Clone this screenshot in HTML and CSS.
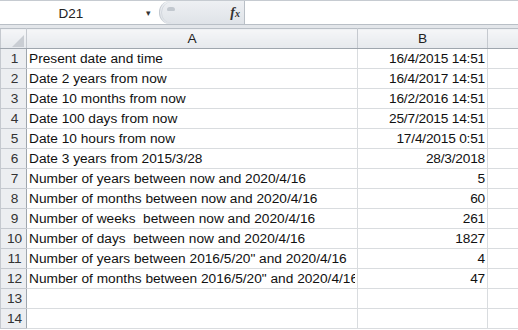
FILE: index.html
```html
<!DOCTYPE html>
<html lang="en">
<head>
    <meta charset="UTF-8">
    <title>Date calculations</title>
    <link rel="stylesheet" href="styles.css">
</head>
<body>
    <div class="formula-bar">
        <div class="name-box">
            <span class="cell-ref">D21</span>
            <span class="drop">&#9662;</span>
        </div>
        <div class="fx-area">
            <div class="pill"><span class="knob"></span></div>
            <span class="fx"><i>f</i><small>x</small></span>
        </div>
        <div class="formula-input"></div>
    </div>
    <div class="bar-gap"></div>
    <table class="sheet">
        <colgroup>
            <col class="col-head">
            <col class="col-a">
            <col class="col-b">
            <col>
        </colgroup>
        <thead>
            <tr>
                <th class="corner">
                    <svg width="12" height="12" viewBox="0 0 12 12"><path d="M12 0 L12 12 L0 12 Z" fill="#c9cdd3"/></svg>
                </th>
                <th>A</th>
                <th>B</th>
                <th></th>
            </tr>
        </thead>
        <tbody id="rows"></tbody>
    </table>

    <script>
        const rows = [
            ['Present date and time', '16/4/2015 14:51'],
            ['Date 2 years from now', '16/4/2017 14:51'],
            ['Date 10 months from now', '16/2/2016 14:51'],
            ['Date 100 days from now', '25/7/2015 14:51'],
            ['Date 10 hours from now', '17/4/2015 0:51'],
            ['Date 3 years from 2015/3/28', '28/3/2018'],
            ['Number of years between now and 2020/4/16', '5'],
            ['Number of months between now and 2020/4/16', '60'],
            ['Number of weeks  between now and 2020/4/16', '261'],
            ['Number of days  between now and 2020/4/16', '1827'],
            ['Number of years between 2016/5/20" and 2020/4/16', '4'],
            ['Number of months between 2016/5/20" and 2020/4/16', '47'],
            ['', ''],
            ['', '']
        ];

        const body = document.getElementById('rows');
        rows.forEach((row, index) => {
            const tr = document.createElement('tr');
            tr.innerHTML = `
                <th>${index + 1}</th>
                <td class="text"><div class="clip">${row[0].replace(/  /g, ' &nbsp;')}</div></td>
                <td class="num">${row[1]}</td>
                <td></td>`;
            body.appendChild(tr);
        });
    </script>
</body>
</html>
```

FILE: styles.css
```css
* {
    margin: 0;
    padding: 0;
    box-sizing: border-box;
}
body {
    background-color: #ffffff;
    font-family: 'Liberation Sans', Arial, sans-serif;
    width: 518px;
    height: 330px;
    overflow: hidden;
}
.formula-bar {
    display: flex;
    height: 25px;
    border-top: 1px solid #c6cbd1;
    border-bottom: 1px solid #b9bfc6;
    background-color: #ffffff;
}
.name-box {
    width: 159px;
    display: flex;
    align-items: center;
    font-size: 13.5px;
    color: #222;
}
.cell-ref {
    width: 140px;
    text-align: center;
    padding-left: 2px;
    padding-top: 1px;
}
.drop {
    font-size: 9px;
    color: #333;
    margin-left: 6px;
    margin-top: 1px;
}
.fx-area {
    width: 86px;
    display: flex;
    align-items: center;
    background: linear-gradient(#eef0f3, #dfe3e8);
    border-left: 1px solid #c3c9d0;
    border-right: 1px solid #b9bfc6;
    border-radius: 11px 0 0 11px;
}
.pill {
    width: 22px;
    height: 21px;
    margin-left: 1px;
    border-radius: 11px 0 0 11px;
    border-left: 1px solid #d2d7dd;
    display: flex;
    align-items: flex-start;
    padding: 5px 0 0 5px;
}
.knob {
    width: 8px;
    height: 4px;
    border-radius: 4px 4px 2px 2px;
    background-color: #c2c8cf;
}
.fx {
    margin-left: auto;
    margin-right: 4px;
    font-family: 'Liberation Serif', 'Times New Roman', serif;
    font-weight: bold;
    color: #333;
    font-size: 14px;
}
.fx small {
    font-size: 10px;
    font-style: italic;
}
.formula-input {
    flex: 1;
    background-color: #ffffff;
}
.bar-gap {
    height: 3px;
    background-color: #e3e6ea;
}
.sheet {
    border-collapse: collapse;
    table-layout: fixed;
    width: 540px;
    font-size: 13.7px;
    color: #111;
}
.col-head {
    width: 26px;
}
.col-a {
    width: 331px;
}
.col-b {
    width: 130px;
}
.sheet th {
    font-weight: normal;
    background: linear-gradient(#f5f6f8, #e6e9ed);
    border: 1px solid #c5c9cf;
    color: #222;
    height: 20px;
}
.sheet thead th {
    border-top: 1px solid #b9bfc6;
    border-bottom: 1px solid #9fa6ae;
}
.sheet tbody th {
    text-align: center;
    color: #333;
    background: #eceef1;
    border-right: 1px solid #9fa6ae;
    padding-left: 2px;
}
.corner {
    text-align: right;
    vertical-align: bottom;
    padding: 0 2px 1px 0;
}
.corner svg {
    display: block;
    margin-left: auto;
}
.sheet td {
    border: 1px solid #d9dcdf;
    height: 20px;
    padding: 0 2px;
    white-space: nowrap;
}
.clip {
    overflow: hidden;
    white-space: nowrap;
}
.num {
    text-align: right;
    letter-spacing: -0.2px;
}
```
